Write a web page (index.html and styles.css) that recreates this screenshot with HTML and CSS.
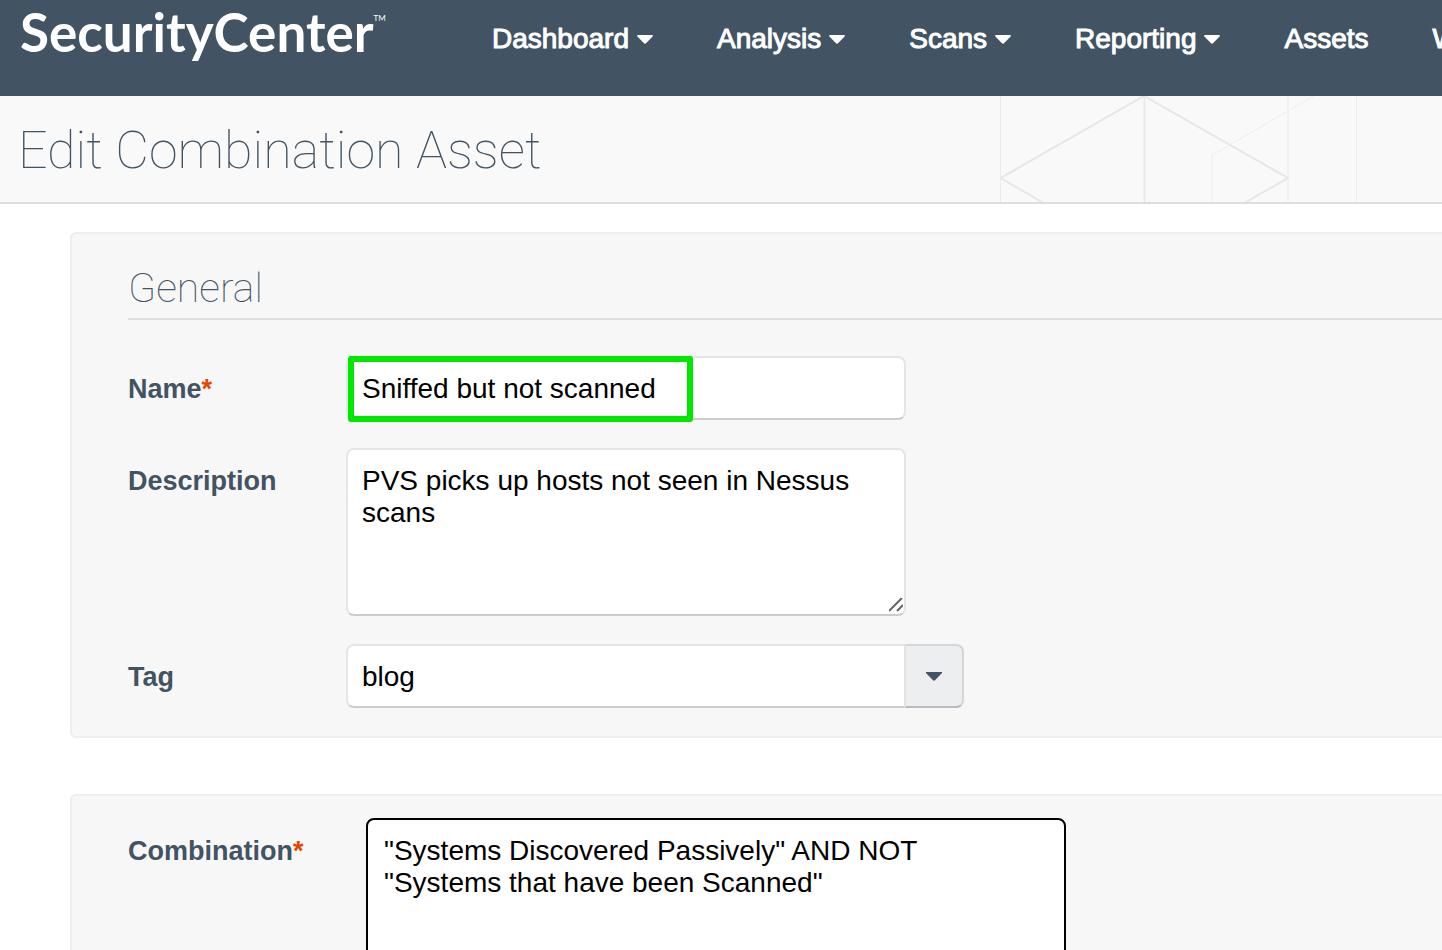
FILE: index.html
```html
<!DOCTYPE html>
<html lang="en">
<head>
    <meta charset="UTF-8">
    <meta name="viewport" content="width=device-width, initial-scale=1.0">
    <title>SecurityCenter</title>
    <link rel="stylesheet" href="styles.css">
</head>
<body>
    <header class="topbar">
        <a class="logo" href="#">SecurityCenter<span class="logo-tm">TM</span></a>
        <nav class="nav">
            <a href="#">Dashboard <svg class="caret" viewBox="0 0 16 9"><path d="M1 0h14q1.500 .3 .6 1.500L9 8.300q-1 .9-2 0L.4 1.500Q-.5.3 1 0z"/></svg></a>
            <a href="#">Analysis <svg class="caret" viewBox="0 0 16 9"><path d="M1 0h14q1.500 .3 .6 1.500L9 8.300q-1 .9-2 0L.4 1.500Q-.5.3 1 0z"/></svg></a>
            <a href="#">Scans <svg class="caret" viewBox="0 0 16 9"><path d="M1 0h14q1.500 .3 .6 1.500L9 8.300q-1 .9-2 0L.4 1.500Q-.5.3 1 0z"/></svg></a>
            <a href="#">Reporting <svg class="caret" viewBox="0 0 16 9"><path d="M1 0h14q1.500 .3 .6 1.500L9 8.300q-1 .9-2 0L.4 1.500Q-.5.3 1 0z"/></svg></a>
            <a href="#">Assets</a>
            <a href="#">Workflow</a>
        </nav>
    </header>

    <div class="titlebar">
        <h1>Edit Combination Asset</h1>
        <svg class="pattern" viewBox="0 0 442 106" fill="none" stroke="#e6e6e6" stroke-width="2">
            <path d="M144 0L0.500 82L42 106M144 0L288 82L246 106"/>
            <path d="M144.500 0V106" stroke="#e9e9e9"/>
            <path d="M288 0V106M0.500 0V106" stroke="#ebebeb" stroke-width="1"/>
            <path d="M212 106V59L314 0M356.500 0V106" stroke="#ededed" stroke-width="1"/>
        </svg>
    </div>

    <main class="content">
        <!-- General -->
        <section class="panel">
            <h2>General</h2>
            <div class="row">
                <label for="name">Name<span class="required">*</span></label>
                <div class="field">
                    <input id="name" class="control" type="text" value="Sniffed but not scanned">
                    <span class="highlight"></span>
                </div>
            </div>
            <div class="row">
                <label for="description">Description</label>
                <div class="field">
                    <textarea id="description" class="control description">PVS picks up hosts not seen in Nessus scans</textarea>
                    <svg class="grip" viewBox="0 0 14 14" stroke="#666" stroke-width="2"><path d="M0 13L13 0M8 13L14 7"/></svg>
                </div>
            </div>
            <div class="row">
                <label for="tag">Tag</label>
                <div class="field select">
                    <select id="tag" class="control">
                        <option>blog</option>
                    </select>
                    <span class="select-arrow"><svg class="caret" viewBox="0 0 16 9"><path d="M0 0h16v1L9 8.300q-1 .9-2 0L0 1z"/></svg></span>
                </div>
            </div>
        </section>

        <!-- Combination -->
        <section class="panel panel-combination">
            <div class="row">
                <label for="combination">Combination<span class="required">*</span></label>
                <textarea id="combination" class="combination" spellcheck="false">"Systems Discovered Passively" AND NOT
"Systems that have been Scanned"</textarea>
            </div>
        </section>
    </main>
</body>
</html>
```
FILE: styles.css
```css
* {
    box-sizing: border-box;
    margin: 0;
    padding: 0;
}

body {
    height: 100vh;
    overflow: hidden;
    background-color: #fff;
    color: #425363;
    font-family: "Liberation Sans", Arial, sans-serif;
    font-size: 28px;
    line-height: 32px;
}

/* Top bar */
.topbar {
    display: flex;
    height: 96px;
    padding: 0 20px;
    background-color: #425363;
    overflow: hidden;
}

.topbar a {
    color: #fff;
    text-decoration: none;
    white-space: nowrap;
}

.logo {
    display: flex;
    flex: none;
    width: 472px;
    font-family: Lato, sans-serif;
    font-size: 53px;
    font-weight: 700;
    line-height: 64px;
}

.logo-tm {
    font-size: 8px;
    font-weight: 400;
    line-height: 36px;
}

.nav {
    display: flex;
    gap: 64px;
    padding-top: 23px;
    -webkit-text-stroke: 1px #fff;
}

.nav a {
    display: flex;
    flex: none;
    align-items: center;
    gap: 8px;
    height: 32px;
}

.caret {
    width: 16px;
    height: 9px;
    fill: currentColor;
}

/* Page title */
.titlebar {
    display: flex;
    justify-content: space-between;
    height: 108px;
    padding-left: 18px;
    background-color: #f9f9f9;
    border-bottom: 2px solid #ddd;
}

h1,
h2 {
    font-family: Roboto, Inter, sans-serif;
    font-weight: 100;
}

h1 {
    font-size: 52px;
    line-height: 110px;
    white-space: nowrap;
}

.pattern {
    flex: none;
    width: 442px;
    height: 106px;
}

/* Form panels */
.content {
    display: flex;
    flex-direction: column;
    gap: 56px;
    padding: 28px 0 0 70px;
}

.panel {
    display: flex;
    flex-direction: column;
    gap: 28px;
    padding: 28px 0 28px 56px;
    background-color: #f7f7f7;
    border: 2px solid #eee;
    border-right: none;
    border-radius: 6px 0 0 6px;
}

.panel-combination {
    padding-top: 22px;
}

h2 {
    height: 58px;
    margin-bottom: 8px;
    border-bottom: 2px solid #ddd;
    font-size: 41px;
    line-height: 52px;
}

.row {
    display: flex;
    align-items: flex-start;
}

label {
    width: 218px;
    padding-top: 17px;
    font-size: 27px;
    font-weight: 700;
}

.required {
    color: #e84400;
}

.field {
    position: relative;
    display: flex;
    width: 560px;
}

.control,
.combination {
    width: 100%;
    height: 64px;
    padding: 15px 14px 13px;
    background-color: #fff;
    border: 2px solid #e5e5e5;
    border-bottom-color: #ccc;
    border-radius: 8px;
    color: #000;
    font: inherit;
    outline: none;
    resize: none;
    appearance: none;
}

.description {
    height: 168px;
}

.grip {
    position: absolute;
    right: 3px;
    bottom: 4px;
    width: 14px;
    height: 14px;
}

.highlight {
    position: absolute;
    top: 0;
    left: 2px;
    width: 345px;
    height: 66px;
    border: 6px solid #00e800;
    border-radius: 3px;
    pointer-events: none;
}

.select {
    width: 618px;
}

.select-arrow {
    position: absolute;
    top: 0;
    right: 0;
    display: flex;
    align-items: center;
    justify-content: center;
    width: 60px;
    height: 64px;
    background-color: #edeef0;
    border: 2px solid #d4d6d9;
    border-bottom-color: #b8bbbf;
    border-left-color: #e2e3e5;
    border-radius: 0 8px 8px 0;
    pointer-events: none;
}

.combination {
    width: 700px;
    height: 200px;
    margin-left: 20px;
    padding: 15px 16px 13px;
    border-color: #000;
}

.panel-combination label {
    flex: none;
}
```
